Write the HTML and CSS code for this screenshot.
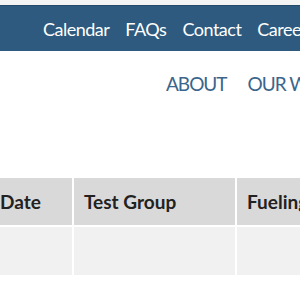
FILE: index.html
```html
<!DOCTYPE html>
<html lang="en">
<head>
  <meta charset="UTF-8" />
  <title>Testing Schedule</title>
  <link rel="stylesheet" href="styles.css">
</head>
<body>
  <div class="top-strip"></div>
  <nav class="util-nav">
    <a href="#">Calendar</a>
    <a href="#">FAQs</a>
    <a href="#">Contact</a>
    <a href="#">Careers</a>
  </nav>

  <nav class="main-nav">
    <a href="#">ABOUT</a>
    <a href="#">OUR WORK</a>
  </nav>

  <div class="table-wrap">
    <table class="schedule">
      <thead>
        <tr>
          <th class="col-date">Date</th>
          <th class="col-group">Test Group</th>
          <th class="col-fuel">Fueling</th>
        </tr>
      </thead>
      <tbody>
        <tr>
          <td></td>
          <td></td>
          <td></td>
        </tr>
      </tbody>
    </table>
  </div>
</body>
</html>
```

FILE: styles.css
```css
body {
  margin: 0;
  font-family: Lato, "Open Sans", sans-serif;
  background: #fff;
  overflow: hidden;
}

.top-strip {
  height: 5px;
  background: #f4f4f4;
}

/* Utility nav */
.util-nav {
  display: flex;
  align-items: center;
  gap: 16px;
  height: 46px;
  padding-left: 43px;
  background: #2d5a7e;
  border-top: 1px solid #244a69;
  box-sizing: border-box;
  white-space: nowrap;
}

.util-nav a {
  color: #fff;
  font-size: 18px;
  letter-spacing: -0.5px;
  text-decoration: none;
}

/* Main nav */
.main-nav {
  display: flex;
  gap: 21px;
  padding: 21px 0 0 166px;
  height: 125px;
  box-sizing: border-box;
  white-space: nowrap;
}

.main-nav a {
  color: #3b658b;
  font-size: 19px;
  letter-spacing: -1px;
  text-decoration: none;
}

/* Table */
.table-wrap {
  width: 600px;
  margin-left: -12px;
}

.schedule {
  width: 471px;
  table-layout: fixed;
  border-collapse: separate;
  border-spacing: 2px;
  white-space: nowrap;
}

.schedule th {
  height: 47px;
  padding: 0 10px;
  background: #d9d9d9;
  color: #222;
  font-size: 19px;
  font-weight: 700;
  text-align: left;
}

.schedule td {
  height: 46px;
  background: #f1f1f1;
}

.col-date { width: 62px; }
.col-group { width: 141px; }
.col-fuel { width: 200px; }
```
